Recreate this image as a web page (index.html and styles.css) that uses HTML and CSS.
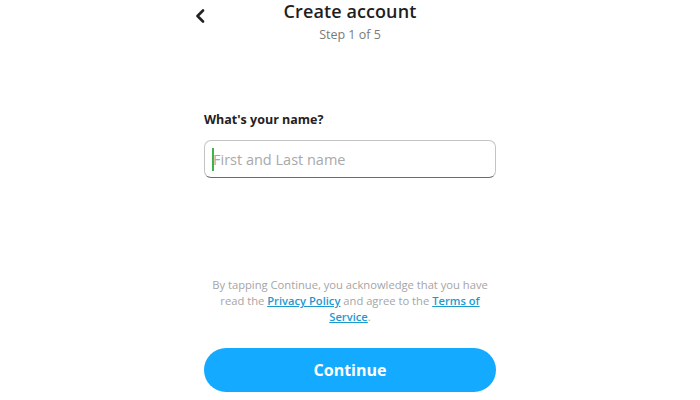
FILE: index.html
```html
<!DOCTYPE html>
<html lang="en">
<head>
  <meta charset="UTF-8">
  <meta name="viewport" content="width=device-width, initial-scale=1.0">
  <title>Create account</title>
  <link rel="stylesheet" href="styles.css">
</head>
<body>
  <main class="signup">
    <header class="top">
      <button class="back" aria-label="Back">
        <svg width="10" height="14" viewBox="0 0 10 14"><path d="M8 1.5 2.5 7 8 12.5" fill="none" stroke="#222" stroke-width="2.6" stroke-linecap="round" stroke-linejoin="round"/></svg>
      </button>
      <h1>Create account</h1>
      <div class="step">Step 1 of 5</div>
    </header>

    <section class="form">
      <label for="name">What's your name?</label>
      <div class="field">
        <span class="caret"></span>
        <input type="text" id="name" placeholder="First and Last name">
      </div>
    </section>

    <p class="terms">
      By tapping Continue, you acknowledge that you have read the
      <a href="#">Privacy Policy</a> and agree to the <a href="#">Terms of Service</a>.
    </p>

    <button class="continue">Continue</button>
  </main>
</body>
</html>
```

FILE: styles.css
```css
body {
  margin: 0;
  background: #fff;
  font-family: "Open Sans", "Noto Sans", sans-serif;
  color: #222;
}

.signup {
  width: 292px;
  margin: 0 auto;
  display: flex;
  flex-direction: column;
}

.top {
  position: relative;
  text-align: center;
}

.back {
  position: absolute;
  left: -11px;
  top: 9px;
  border: none;
  background: none;
  padding: 0;
  width: 14px;
  height: 16px;
  cursor: pointer;
}

.top h1 {
  margin: 0;
  font-size: 18px;
  font-weight: 600;
  line-height: 22px;
  letter-spacing: 0.1px;
  color: #1e1e1e;
}

.step {
  margin-top: 4px;
  font-size: 12.5px;
  color: #7a7a7a;
  line-height: 18px;
}

.form {
  margin-top: 68px;
}

label {
  display: block;
  font-size: 12.5px;
  font-weight: 700;
  color: #222;
  line-height: 16px;
  margin-bottom: 12px;
}

.field {
  position: relative;
  height: 38px;
  box-sizing: border-box;
  border: 1px solid #c4c4c4;
  border-bottom-color: #6a6a6a;
  border-radius: 7px;
}

.caret {
  position: absolute;
  left: 7px;
  top: 7px;
  width: 2px;
  height: 23px;
  background: #3cb44a;
}

.field input {
  width: 100%;
  height: 100%;
  box-sizing: border-box;
  border: none;
  outline: none;
  background: transparent;
  padding: 0 0 0 8px;
  font-family: inherit;
  font-size: 14.5px;
  color: #222;
}

.field input::placeholder {
  color: #a9a9a9;
}

.terms {
  margin: 99px 0 0;
  text-align: center;
  font-size: 11.2px;
  line-height: 16px;
  color: #a5a5a5;
  padding: 0 5px;
}

.terms a {
  color: #1c9ad0;
  font-weight: 600;
  text-decoration: underline;
}

.continue {
  margin-top: 23px;
  height: 44px;
  border: none;
  border-radius: 22px;
  background: #14aaff;
  color: #fff;
  font-family: inherit;
  font-size: 16px;
  font-weight: 700;
  cursor: pointer;
}
```
